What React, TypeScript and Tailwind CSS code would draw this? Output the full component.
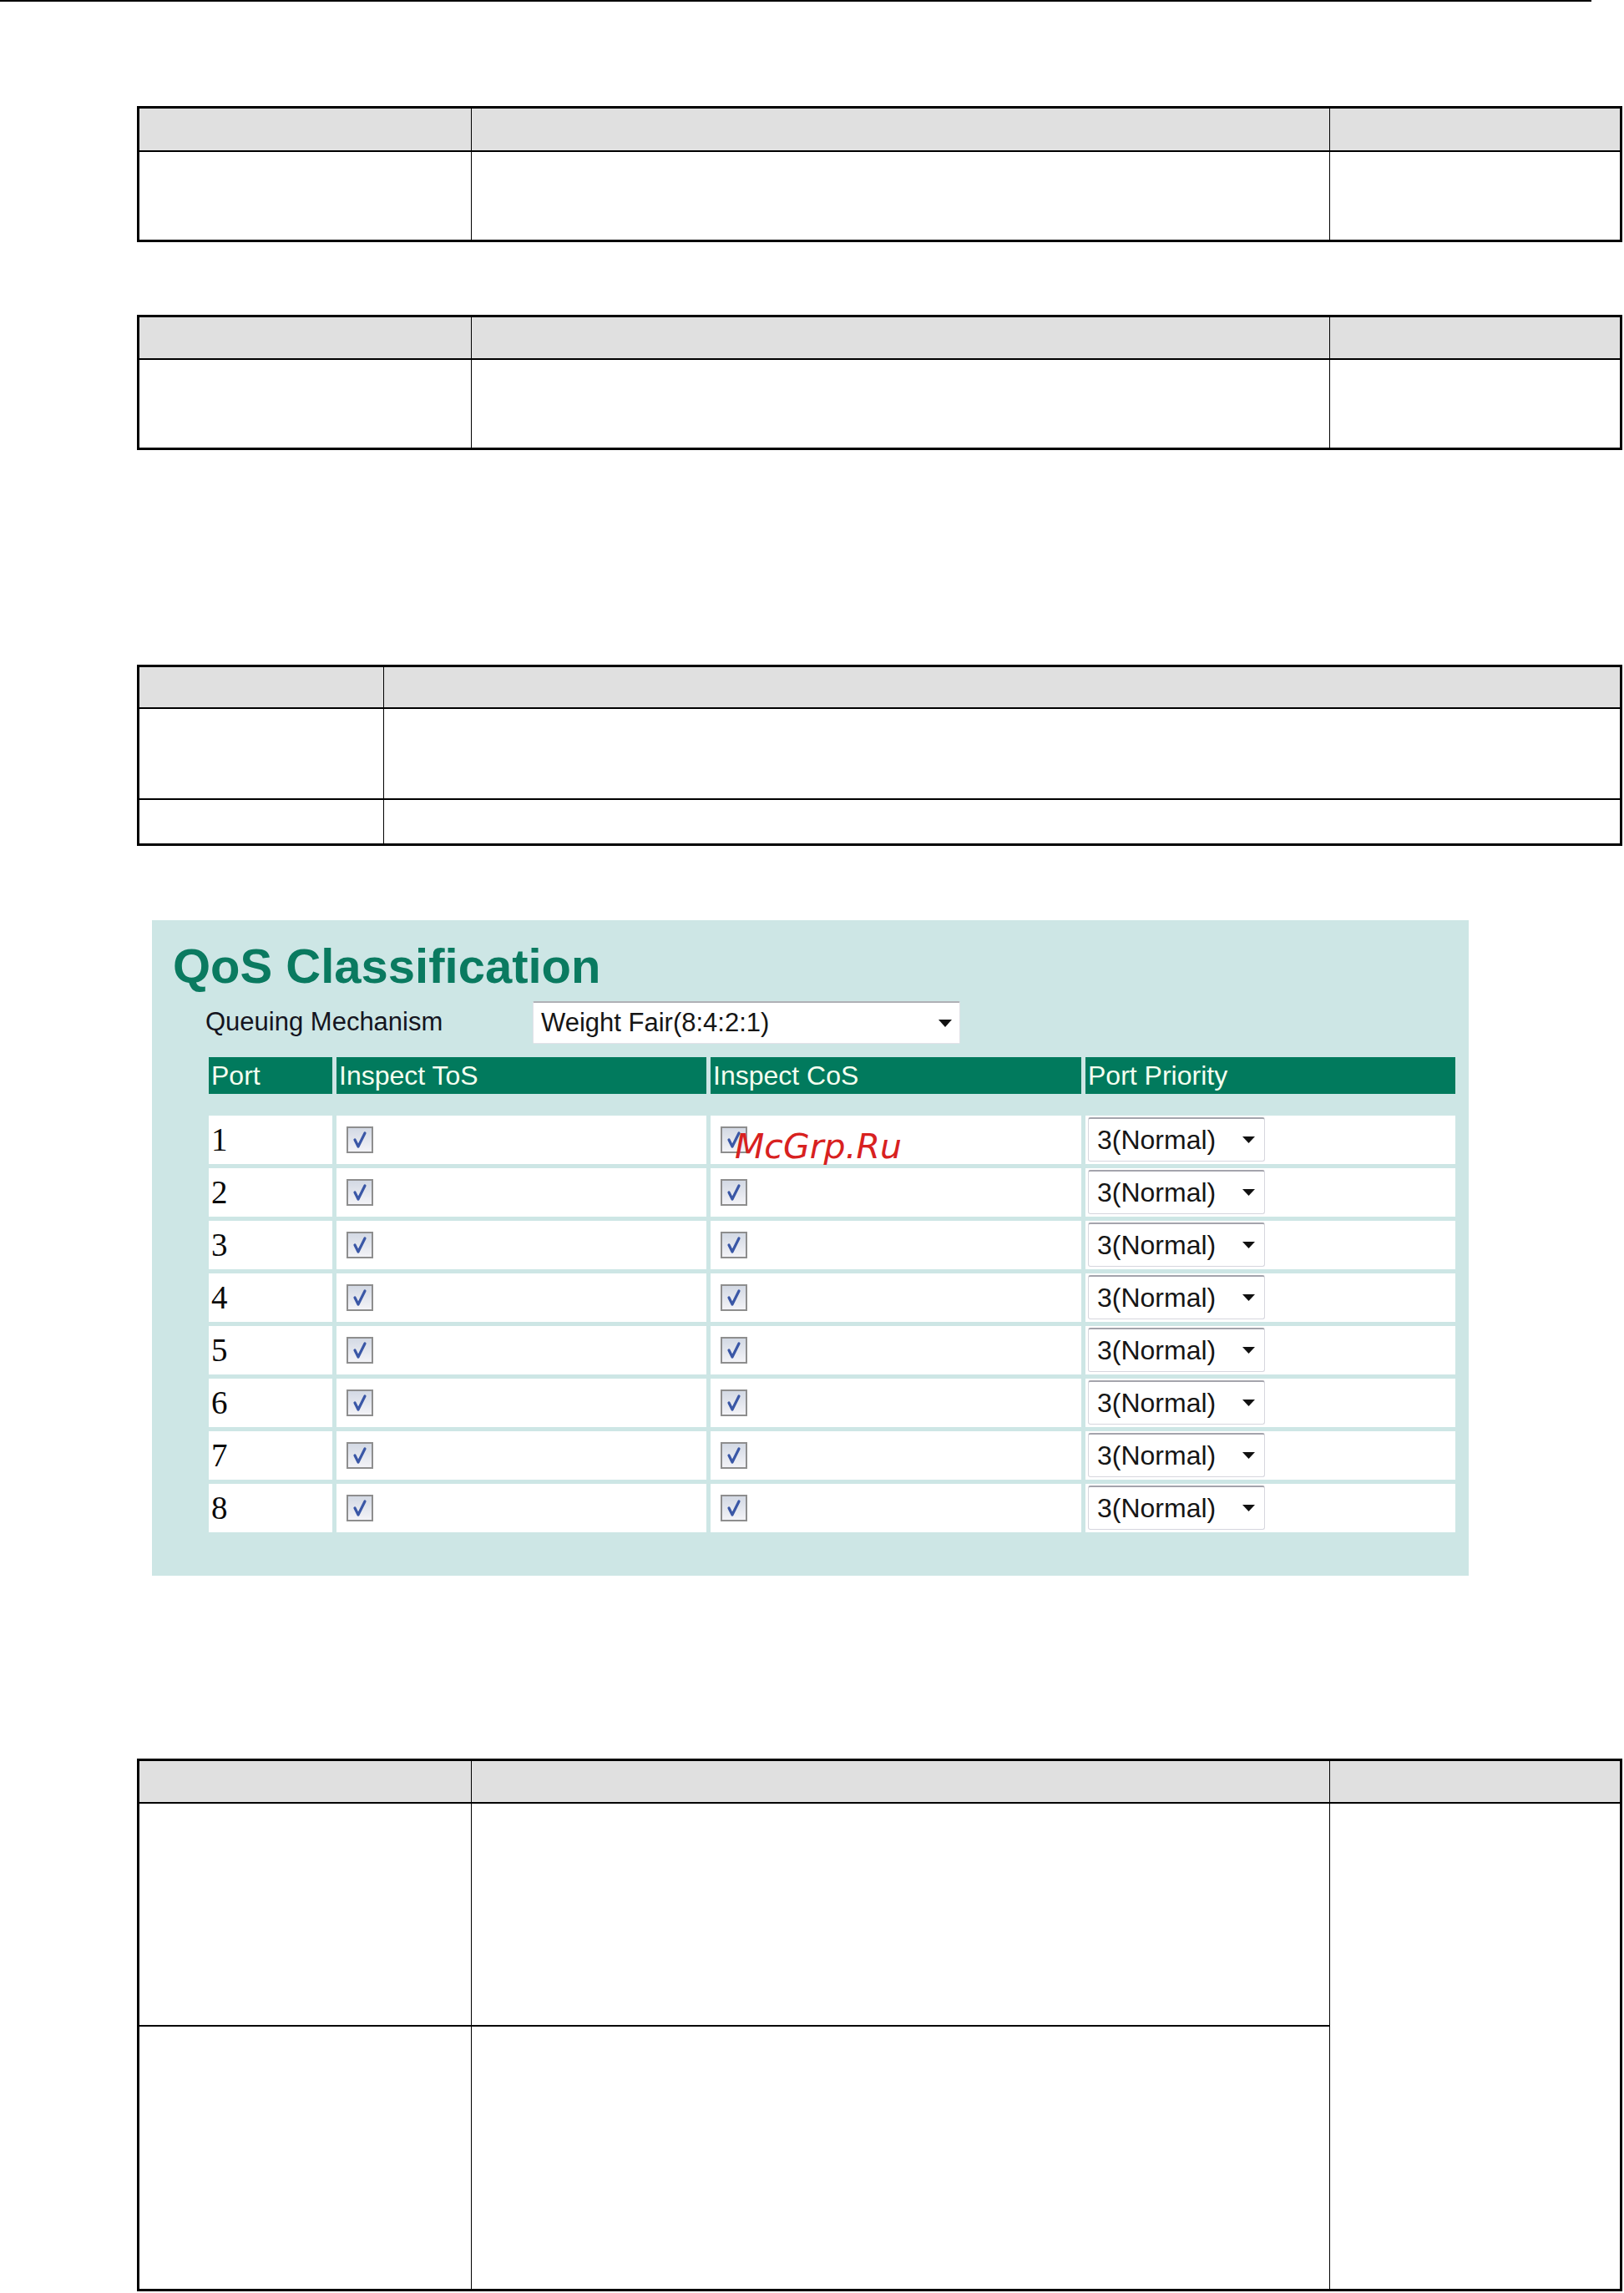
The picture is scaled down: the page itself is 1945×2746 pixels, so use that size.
import React from "react";

const sans = "font-['Liberation_Sans',Arial,sans-serif]";

function Check() {
  return (
    <div className="w-[32px] h-[32px] border-2 border-[#8e8e8e] bg-gradient-to-b from-[#d3d9e4] to-[#f3f3f7] flex items-center justify-center">
      <svg width="26" height="26" viewBox="0 0 26 26">
        <path d="M7 13 L11 21 L19 5" fill="none" stroke="#3a57a6" strokeWidth="3.2" strokeLinecap="round" strokeLinejoin="round" />
      </svg>
    </div>
  );
}

function Arrow({ w = 15, h = 8 }: { w?: number; h?: number }) {
  return (
    <svg width={w} height={h} viewBox={`0 0 ${w} ${h}`}>
      <polygon points={`0,0 ${w},0 ${w / 2},${h}`} fill="#111" />
    </svg>
  );
}

function Prio() {
  return (
    <div className="ml-[3px] mt-[2px] w-[212px] h-[53px] bg-white border border-[#d6d6de] border-t-2 border-t-[#a4a4ac] rounded-[3px] flex items-center justify-between pl-[10px] pr-[11px]">
      <span className={`${sans} text-[32px] text-[#151515]`}>3(Normal)</span>
      <Arrow w={15} h={8} />
    </div>
  );
}

function Row3({ h, border }: { h: number; border?: boolean }) {
  return (
    <div className={`flex ${border ? "border-b-2 border-black" : ""}`} style={{ height: h }}>
      <div className="w-[397px]" />
      <div className="w-[1028px] border-l border-black" />
      <div className="flex-1 border-l border-black" />
    </div>
  );
}

export default function App() {
  const ports = [1, 2, 3, 4, 5, 6, 7, 8];
  return (
    <div className="w-[1945px] h-[2746px] bg-white overflow-hidden">
      <div className="h-[2px] w-[1906px] bg-black" />

      {/* Table 1 */}
      <div className="mt-[125px] ml-[164px] w-[1779px] border-[3px] border-black">
        <div className="bg-[#e0e0e0]">
          <Row3 h={52} border />
        </div>
        <Row3 h={105} />
      </div>

      {/* Table 2 */}
      <div className="mt-[87px] ml-[164px] w-[1779px] border-[3px] border-black">
        <div className="bg-[#e0e0e0]">
          <Row3 h={51} border />
        </div>
        <Row3 h={105} />
      </div>

      {/* Table 3 */}
      <div className="mt-[257px] ml-[164px] w-[1779px] border-[3px] border-black">
        <div className="flex h-[50px] bg-[#e0e0e0] border-b-2 border-black">
          <div className="w-[292px]" />
          <div className="flex-1 border-l border-black" />
        </div>
        <div className="flex h-[109px] border-b-2 border-black">
          <div className="w-[292px]" />
          <div className="flex-1 border-l border-black" />
        </div>
        <div className="flex h-[52px]">
          <div className="w-[292px]" />
          <div className="flex-1 border-l border-black" />
        </div>
      </div>

      {/* QoS panel */}
      <div className="relative mt-[89px] ml-[182px] w-[1577px] bg-[#cde6e5] pt-[26px] pb-[52px]">
        <div className={`${sans} pl-[25px] text-[58px] leading-[58px] font-bold text-[#0a7a60]`}>QoS Classification</div>

        <div className="mt-[13px] flex items-center h-[51px]">
          <div className={`${sans} w-[456px] pl-[64px] text-[31px] text-[#141420]`}>Queuing Mechanism</div>
          <div className="w-[512px] h-[51px] bg-white border border-[#e2e2e8] border-t-2 border-t-[#b0b0b6] rounded-[2px] flex items-center justify-between pl-[9px] pr-[9px]">
            <span className={`${sans} text-[31px] text-[#151515]`}>Weight Fair(8:4:2:1)</span>
            <Arrow w={16} h={9} />
          </div>
        </div>

        <div className="mt-[16px] ml-[68px]">
          <div className={`flex gap-[5px] h-[44px] ${sans} text-[32px] text-[#f4fff0]`}>
            <div className="w-[148px] bg-[#017a5d] flex items-center pl-[3px]">Port</div>
            <div className="w-[443px] bg-[#017a5d] flex items-center pl-[3px]">Inspect ToS</div>
            <div className="w-[444px] bg-[#017a5d] flex items-center pl-[3px]">Inspect CoS</div>
            <div className="w-[443px] bg-[#017a5d] flex items-center pl-[3px]">Port Priority</div>
          </div>
          <div className="mt-[26px] flex flex-col gap-[5px]">
            {ports.map((p) => (
              <div key={p} className="flex gap-[5px] h-[58px]">
                <div className="w-[148px] bg-white flex items-center pl-[3px] font-['Liberation_Serif','Times_New_Roman',serif] text-[39px] text-[#0a0a0a]">
                  {p}
                </div>
                <div className="w-[443px] bg-white flex items-center pl-[12px]">
                  <Check />
                </div>
                <div className="w-[444px] bg-white flex items-center pl-[12px]">
                  <Check />
                </div>
                <div className="w-[443px] bg-white">
                  <Prio />
                </div>
              </div>
            ))}
          </div>
        </div>

        <div className="absolute left-[698px] top-[251px] font-['DejaVu_Sans',sans-serif] italic text-[41px] leading-[41px] text-[#d8211f]">
          McGrp.Ru
        </div>
      </div>

      {/* Table 4 */}
      <div className="mt-[219px] ml-[164px] w-[1779px] border-[3px] border-black">
        <div className="bg-[#e0e0e0]">
          <Row3 h={51} border />
        </div>
        <div className="flex">
          <div className="w-[1425px]">
            <div className="flex h-[267px] border-b-2 border-black">
              <div className="w-[397px]" />
              <div className="flex-1 border-l border-black" />
            </div>
            <div className="flex h-[314px]">
              <div className="w-[397px]" />
              <div className="flex-1 border-l border-black" />
            </div>
          </div>
          <div className="flex-1 border-l border-black" />
        </div>
      </div>
    </div>
  );
}
